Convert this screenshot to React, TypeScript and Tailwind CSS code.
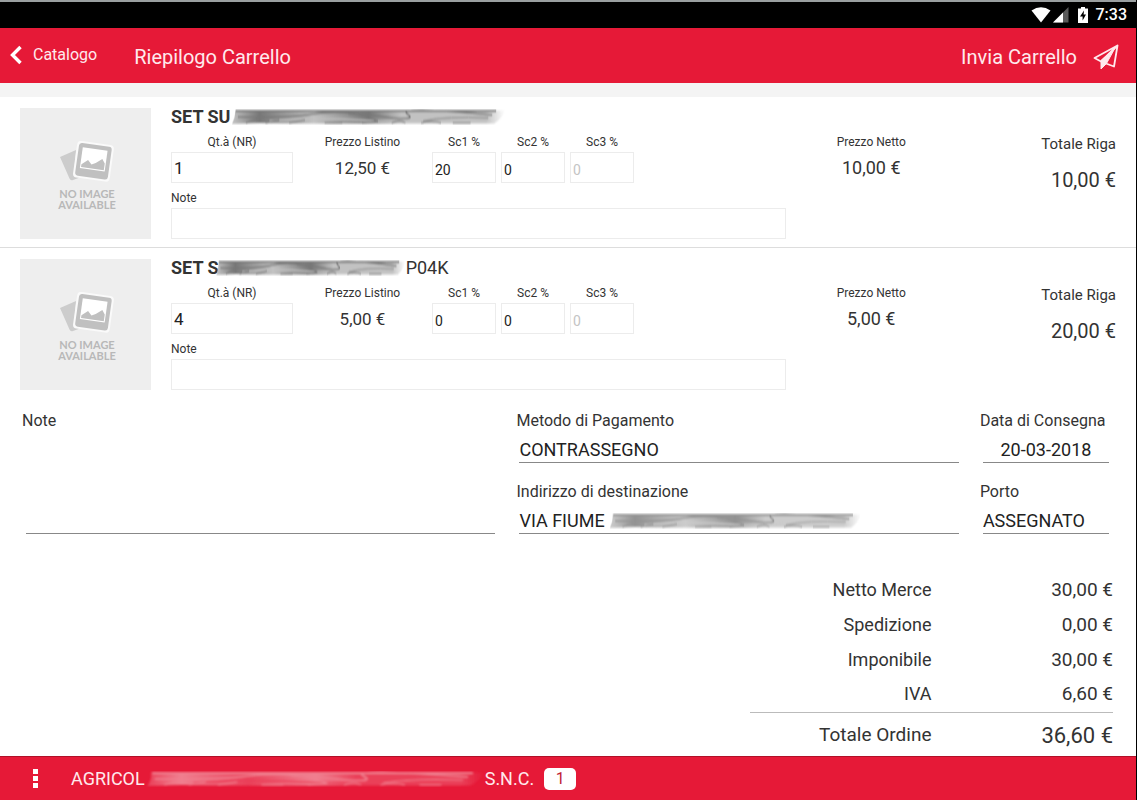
import { useState } from "react";

interface CartLine {
  id: number;
  title: string;
  code?: string;
  qty: string;
  listino: string;
  sconti: [string, string, string];
  netto: string;
  totale: string;
}

const LINES: CartLine[] = [
  { id: 1, title: "SET SU", qty: "1", listino: "12,50 €", sconti: ["20", "0", ""], netto: "10,00 €", totale: "10,00 €" },
  { id: 2, title: "SET S", code: "P04K", qty: "4", listino: "5,00 €", sconti: ["0", "0", ""], netto: "5,00 €", totale: "20,00 €" },
];

const TOTALS = [
  ["Netto Merce", "30,00 €"],
  ["Spedizione", "0,00 €"],
  ["Imponibile", "30,00 €"],
  ["IVA", "6,60 €"],
];

// smeared strip over private data
function Redaction({ id, className, dark, light }: { id: string; className: string; dark: string; light: string }) {
  return (
    <svg className={className} viewBox="0 0 280 16" preserveAspectRatio="none" aria-hidden="true">
      <defs>
        <linearGradient id={id}>
          <stop offset="0" stopColor={light} />
          <stop offset="0.1" stopColor={dark} />
          <stop offset="0.3" stopColor={light} />
          <stop offset="0.5" stopColor={dark} />
          <stop offset="0.62" stopColor={light} />
          <stop offset="0.93" stopColor={light} />
          <stop offset="1" stopColor={light} stopOpacity="0" />
        </linearGradient>
        <filter id={`${id}-soft`} x="-2%" y="-20%" width="104%" height="140%">
          <feGaussianBlur stdDeviation="0.8" />
        </filter>
      </defs>
      <g filter={`url(#${id}-soft)`} fill="none" stroke={dark}>
        <path d="M5 1.5 H279 Q276 10 268 14.5 H150 Q80 15 30 14 L2 15 Q6 8 5 1.5Z" fill={`url(#${id})`} stroke="none" />
        <path d="M6 2 H270" strokeWidth="1.8" />
        <path d="M8 8 Q60 9 84 5 T150 7 T180 5 T266 6" strokeWidth="1.6" />
        <path d="M40 12 Q90 8 130 11 T190 10 L262 9" strokeWidth="1.6" stroke={light} />
        <path d="M120 5 Q140 6 150 13 M196 12 Q220 7 262 9" strokeWidth="1" />
        <path d="M16 14 l12 -4 m8 4 l14 -3 m10 3 l16 -3 m20 3 h18 m20 0 l16 -2 m14 2 q8 -4 14 0 m16 0 q10 -3 20 0 m12 0 h18" strokeWidth="1.4" opacity="0.8" />
      </g>
    </svg>
  );
}

function NoImage() {
  return (
    <div className="flex h-[131px] w-[131px] shrink-0 flex-col items-center bg-[#eeeeee] pt-[33px] pl-[3px]">
      <svg className="h-11 w-14" viewBox="0 0 56 44" aria-hidden="true">
        <path d="M1 16 L17 9 L15 32 L22 36 L14 39 Q11.5 40 10.5 37.5Z" fill="#cccccc" />
        <g transform="rotate(8 36 20)">
          <rect x="16" y="2" width="37" height="37" rx="4" fill="#fafafa" />
          <rect x="18" y="4" width="33" height="33" rx="3" fill="#c0c0c0" />
          <rect x="22" y="8" width="25" height="21" fill="#ffffff" />
          <path d="M23 28 V25 L29 20 L33 24 L37 22 L43 17 L46 21 V28Z" fill="#c0c0c0" />
        </g>
      </svg>
      <p className="mt-[3px] text-center font-['Lato',sans-serif] text-[11px] leading-[11px] font-bold text-[#b8b8b8]">
        NO IMAGE
        <br />
        AVAILABLE
      </p>
    </div>
  );
}

function CartRow({ line, last }: { line: CartLine; last: boolean }) {
  const [qty, setQty] = useState(line.qty);
  const [sconti, setSconti] = useState<string[]>(line.sconti);
  const field = "h-[31px] w-full border border-[#ececec] bg-white px-0.5 text-[#222222] outline-none placeholder:text-[#c4c4c4]";

  return (
    <li
      className={`grid grid-cols-[131px_634fr_171fr_159fr] pt-[11px] pr-5 pb-2 pl-5 ${last ? "" : "border-b border-[#dddddd]"}`}
    >
      <NoImage />
      <div className="ml-5">
        <h2 className="flex items-center text-lg leading-[18px] font-bold text-[#333333]">
          <span>{line.title}</span>
          <Redaction
            id={`row-${line.id}`}
            className={line.code ? "-ml-1 h-4 w-[191px]" : "-ml-px h-4 w-[276px]"}
            dark="#777777"
            light="#c2c2c2"
          />
          {line.code && <span className="font-normal">{line.code}</span>}
        </h2>
        <div className="mt-2 flex text-xs leading-4">
          <div className="w-[122px]">
            <label htmlFor={`qty-${line.id}`} className="mb-0.5 block text-center">
              Qt.à (NR)
            </label>
            <input id={`qty-${line.id}`} value={qty} onChange={(e) => setQty(e.target.value)} className={`${field} text-[17px]`} />
          </div>
          <div className="w-[139px] text-center">
            <p>Prezzo Listino</p>
            <p className="mt-1.5 text-[17px] leading-6">{line.listino}</p>
          </div>
          <div className="flex gap-[5px]">
            {sconti.map((value, i) => (
              <div key={i} className="w-16">
                <label htmlFor={`sc-${line.id}-${i}`} className="mb-0.5 block text-center">
                  Sc{i + 1} %
                </label>
                <input
                  id={`sc-${line.id}-${i}`}
                  value={value}
                  placeholder="0"
                  onChange={(e) => setSconti(sconti.map((s, j) => (j === i ? e.target.value : s)))}
                  className={`${field} pt-1 text-sm`}
                />
              </div>
            ))}
          </div>
        </div>
        <label htmlFor={`note-${line.id}`} className="mt-[7px] mb-0.5 block text-xs leading-4">
          Note
        </label>
        <input id={`note-${line.id}`} className={`${field} text-sm`} />
      </div>
      <div className="pt-[26px] text-center">
        <p className="text-xs leading-4">Prezzo Netto</p>
        <p className="mt-1.5 text-lg leading-6">{line.netto}</p>
      </div>
      <div className="pt-[26px] text-right">
        <p className="text-[15px] leading-5">Totale Riga</p>
        <p className="mt-3.5 text-xl leading-6">{line.totale}</p>
      </div>
    </li>
  );
}

function StatusBar() {
  return (
    <div className="flex h-7 items-center justify-end border-t-2 border-[#9a9fa0] bg-black pr-[9px] text-white">
      <svg className="h-4 w-5" viewBox="0 0 20 16" aria-hidden="true">
        <path d="M10 15.5 L0.5 3.5 Q10 -3 19.5 3.5Z" fill="currentColor" />
      </svg>
      <svg className="ml-0.5 h-4 w-4" viewBox="0 0 16 16" aria-hidden="true">
        <path d="M0 15.5 L15.5 0 V15.5Z" fill="#5a5a5a" />
        <path d="M0 15.5 L10 5.5 V15.5Z" fill="currentColor" />
      </svg>
      <svg className="ml-2 h-4 w-3" viewBox="0 0 12 16" aria-hidden="true">
        <path d="M4 0 H8 V1.5 H11 V16 H1 V1.5 H4Z" fill="currentColor" />
        <path d="M7 3.5 L3 9.5 H5.6 V13.5 L9 7.5 H6.6Z" fill="#000000" />
      </svg>
      <time className="ml-[7px] text-base leading-5 font-medium">7:33</time>
    </div>
  );
}

export default function App() {
  const [payment, setPayment] = useState("CONTRASSEGNO");
  const [date, setDate] = useState("20-03-2018");
  const [note, setNote] = useState("");
  const line = "mt-[5px] ml-[3px] block h-7 w-[calc(100%-3px)] appearance-none rounded-none border-b border-[#888888] bg-transparent pt-0.5 text-lg leading-6 text-[#222222] outline-none";

  return (
    <div className="flex min-h-screen flex-col border-r border-black bg-white font-['Roboto',sans-serif] text-[#333333]">
      <StatusBar />
      <header className="flex h-[55px] items-center bg-[#e61937] pt-0.5 pr-[17px] pl-2.5 text-[#ffe9ed]">
        <button type="button" className="flex items-center gap-[11px] pb-1 text-base">
          <svg className="h-5 w-3" viewBox="0 0 12 20" fill="none" stroke="#ffffff" strokeWidth="3.4" aria-hidden="true">
            <path d="M10.5 2 L2.5 10 L10.5 18" />
          </svg>
          Catalogo
        </button>
        <h1 className="ml-[37px] text-xl">Riepilogo Carrello</h1>
        <button type="button" className="ml-auto flex items-center gap-4 text-xl">
          Invia Carrello
          <svg className="h-[26px] w-[26px]" viewBox="0 0 26 26" fill="none" stroke="currentColor" strokeWidth="1.8" strokeLinejoin="round" aria-hidden="true">
            <path d="M24.5 1.5 L1.5 14 L8 17.5 L24.5 1.5 L21 22.5 L13 19.5" />
            <path d="M22 4 L8 16.5 V25 L13.5 19.5Z" fill="currentColor" strokeWidth="1" />
          </svg>
        </button>
      </header>
      <div className="h-3.5 bg-[#f4f4f4]" />

      <main className="flex-1">
        <ul>
          {LINES.map((l, i) => (
            <CartRow key={l.id} line={l} last={i === LINES.length - 1} />
          ))}
        </ul>

        <section className="grid grid-cols-[473fr_442fr_129fr] gap-x-[21px] pt-3.5 pr-[27px] pl-[22px] text-base leading-[18px]">
          <div className="flex flex-col">
            <label htmlFor="note">Note</label>
            <textarea
              id="note"
              value={note}
              onChange={(e) => setNote(e.target.value)}
              className="ml-1 flex-1 resize-none border-b border-[#888888] text-lg outline-none"
            />
          </div>
          <div>
            <label htmlFor="payment" className="block">
              Metodo di Pagamento
            </label>
            <select id="payment" value={payment} onChange={(e) => setPayment(e.target.value)} className={line}>
              <option>CONTRASSEGNO</option>
              <option>BONIFICO</option>
            </select>
            <label htmlFor="address" className="mt-5 block">
              Indirizzo di destinazione
            </label>
            <div className="relative">
              <select id="address" className={line}>
                <option>VIA FIUME</option>
              </select>
              <Redaction id="address-hide" className="absolute top-[7px] left-[92px] h-4 w-[254px]" dark="#929292" light="#cccccc" />
            </div>
          </div>
          <div>
            <label htmlFor="date" className="block whitespace-nowrap">
              Data di Consegna
            </label>
            <input id="date" value={date} onChange={(e) => setDate(e.target.value)} className={`${line} text-center`} />
            <label htmlFor="porto" className="mt-5 block">
              Porto
            </label>
            <select id="porto" className={line}>
              <option>ASSEGNATO</option>
              <option>FRANCO</option>
            </select>
          </div>
        </section>

        <table className="mt-[38px] mr-[23px] ml-auto w-[363px] border-collapse text-right text-lg">
          <tbody>
            {TOTALS.map(([label, value]) => (
              <tr key={label} className="h-[35px]">
                <th scope="row" className="w-1/2 text-right font-normal">
                  {label}
                </th>
                <td className="text-[19px]">{value}</td>
              </tr>
            ))}
          </tbody>
          <tfoot>
            <tr className="h-11 border-t border-[#bbbbbb]">
              <th scope="row" className="pt-0.5 text-right text-[19px] font-normal">
                Totale Ordine
              </th>
              <td className="pt-1 text-[22px]">36,60 €</td>
            </tr>
          </tfoot>
        </table>
      </main>

      <footer className="flex h-11 items-center border-t border-[#b01028] bg-[#e61937] pl-[33px] text-lg text-[#ffe9ed]">
        <button type="button" aria-label="Menu" className="flex flex-col gap-0.5">
          <span className="h-[5px] w-[5px] bg-white" />
          <span className="h-[5px] w-[5px] bg-white" />
          <span className="h-[5px] w-[5px] bg-white" />
        </button>
        <p className="ml-[33px] flex items-center">
          AGRICOL
          <Redaction id="customer" className="h-4 w-[340px]" dark="#f07f8f" light="#ea4059" />
          S.N.C.
        </p>
        <span className="ml-2.5 flex h-[22px] w-8 items-center justify-center rounded-[5px] bg-white text-base text-[#c01c36]">1</span>
      </footer>
    </div>
  );
}
